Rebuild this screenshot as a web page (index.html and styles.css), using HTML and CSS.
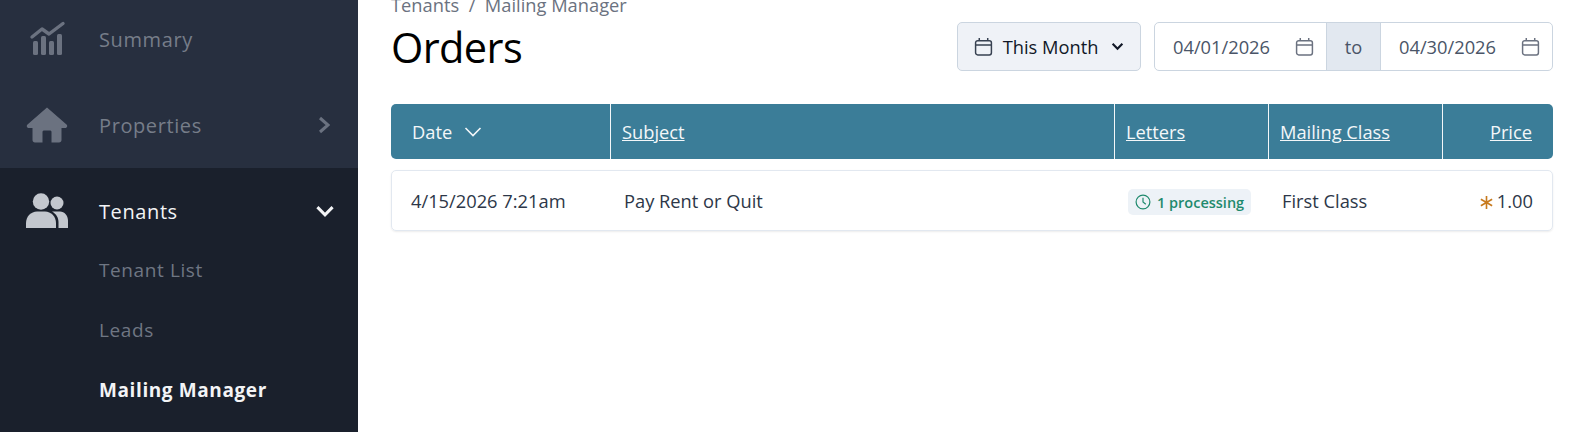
FILE: index.html
```html
<!DOCTYPE html>
<html lang="en">
<head>
  <meta charset="UTF-8" />
  <title>Orders | Mailing Manager</title>
  <link rel="stylesheet" href="styles.css">
</head>
<body>

  <nav class="sidebar">
    <div class="nav-top">
      <a class="nav-item">
        <svg class="nav-icon" viewBox="0 0 42 36" width="42" height="36">
          <path d="M6 16 16 8l7 5L37 2.500" fill="none" stroke="#6b7280" stroke-width="3.400" stroke-linecap="round" stroke-linejoin="round"/>
          <rect x="7" y="20" width="5" height="14" rx="1.500" fill="#6b7280"/>
          <rect x="15" y="15" width="5" height="19" rx="1.500" fill="#6b7280"/>
          <rect x="23" y="20" width="5" height="14" rx="1.500" fill="#6b7280"/>
          <rect x="31" y="13" width="5" height="21" rx="1.500" fill="#6b7280"/>
        </svg>
        <span>Summary</span>
      </a>
      <a class="nav-item">
        <svg class="nav-icon" viewBox="0 0 42 36" width="42" height="36">
          <path d="M21 0.500 1.500 17.500c-1.500 1.500-.5 3.500 1.500 3.500H6.500v12c0 1.500 1 2.500 2.500 2.500h7.500V25c0-1 .8-1.500 1.500-1.500h6c.8 0 1.500.5 1.500 1.500v10.500H33c1.500 0 2.500-1 2.500-2.500V21H39c2 0 3-2 1.500-3.500z" fill="#6b7280"/>
        </svg>
        <span>Properties</span>
        <svg class="nav-chevron chevron-right" viewBox="0 0 12 18" width="12" height="18">
          <path d="M2 2l8 7-8 7" fill="none" stroke="#6b7280" stroke-width="3"/>
        </svg>
      </a>
    </div>
    <div class="nav-open">
      <a class="nav-item nav-current">
        <svg class="nav-icon" viewBox="0 0 42 36" width="42" height="36">
          <circle cx="15" cy="8.500" r="8.200" fill="#c3c7ce"/>
          <circle cx="31" cy="10" r="6.500" fill="#c3c7ce"/>
          <path d="M0 35v-5c0-6.500 5-11.500 11-11.500h8c6 0 11 5 11 11.500v5z" fill="#c3c7ce"/>
          <path d="M26 18.500h8c4.500 0 8 4 8 9V35H32.500v-6c0-4-2-8-6.500-10.500z" fill="#c3c7ce"/>
        </svg>
        <span>Tenants</span>
        <svg class="nav-chevron chevron-down" viewBox="0 0 18 12" width="20" height="13">
          <path d="M2 2l7 7 7-7" fill="none" stroke="#f3f4f6" stroke-width="2.800"/>
        </svg>
      </a>
      <a class="nav-sub">Tenant List</a>
      <a class="nav-sub">Leads</a>
      <a class="nav-sub nav-sub-active">Mailing Manager</a>
    </div>
  </nav>

  <main class="content">
    <div class="crumbs">Tenants &nbsp;/&nbsp; Mailing Manager</div>

    <div class="title-row">
      <h1>Orders</h1>
      <div class="filters">
        <button class="range-btn">
          <svg viewBox="0 0 18 18" width="19" height="19" class="cal">
            <path d="M1.500 5.500A2 2 0 0 1 3.500 3.500h11a2 2 0 0 1 2 2v9.500a2 2 0 0 1-2 2h-11a2 2 0 0 1-2-2zM1.500 7.500h15M5 1v2.500M13 1v2.500" fill="none" stroke="#374151" stroke-width="1.400"/>
          </svg>
          This Month
          <svg viewBox="0 0 12 8" width="13" height="9" class="caret">
            <path d="M1.500 1.500 6 6l4.500-4.500" fill="none" stroke="#111827" stroke-width="2"/>
          </svg>
        </button>
        <div class="dates">
          <div class="date-input">
            <span>04/01/2026</span>
            <svg viewBox="0 0 18 18" width="19" height="19" class="cal">
              <path d="M1.500 5.500A2 2 0 0 1 3.500 3.500h11a2 2 0 0 1 2 2v9.500a2 2 0 0 1-2 2h-11a2 2 0 0 1-2-2zM1.500 7.500h15M5 1v2.500M13 1v2.500" fill="none" stroke="#6b7280" stroke-width="1.400"/>
            </svg>
          </div>
          <div class="date-to">to</div>
          <div class="date-input">
            <span>04/30/2026</span>
            <svg viewBox="0 0 18 18" width="19" height="19" class="cal">
              <path d="M1.500 5.500A2 2 0 0 1 3.500 3.500h11a2 2 0 0 1 2 2v9.500a2 2 0 0 1-2 2h-11a2 2 0 0 1-2-2zM1.500 7.500h15M5 1v2.500M13 1v2.500" fill="none" stroke="#6b7280" stroke-width="1.400"/>
            </svg>
          </div>
        </div>
      </div>
    </div>

    <div class="grid-row table-head">
      <div class="cell head-date">Date
        <svg viewBox="0 0 18 10" width="18" height="10">
          <path d="M1.500 1 9 8.500 16.500 1" fill="none" stroke="#f3f7f9" stroke-width="1.600"/>
        </svg>
      </div>
      <div class="cell"><a>Subject</a></div>
      <div class="cell"><a>Letters</a></div>
      <div class="cell"><a>Mailing Class</a></div>
      <div class="cell cell-right"><a>Price</a></div>
    </div>

    <div class="grid-row table-row">
      <div class="cell">4/15/2026 7:21am</div>
      <div class="cell">Pay Rent or Quit</div>
      <div class="cell">
        <span class="pill">
          <svg viewBox="0 0 16 16" width="16" height="16">
            <circle cx="8" cy="8" r="6.900" fill="none" stroke="#1f8a6d" stroke-width="1.200"/>
            <path d="M8 3.800V8l2.800 2.200" fill="none" stroke="#1f8a6d" stroke-width="1.200"/>
          </svg>
          1 processing
        </span>
      </div>
      <div class="cell">First Class</div>
      <div class="cell cell-right">
        <svg class="coin" viewBox="0 0 12 12" width="13" height="13">
          <path d="M6 0v12M.8 3l10.400 6M.8 9l10.400-6" fill="none" stroke="#c77a1e" stroke-width="1.500"/>
        </svg>
        1.00
      </div>
    </div>
  </main>

</body>
</html>
```

FILE: styles.css
```css
* {
  box-sizing: border-box;
}
html, body {
  height: 432px;
  overflow: hidden;
}
body {
  margin: 0;
  display: flex;
  font-family: "Open Sans", "Noto Sans", sans-serif;
  font-size: 18.3px;
  color: #2d3748;
  background: white;
}

.sidebar {
  width: 358px;
  flex-shrink: 0;
  margin-top: -4px;
  height: 436px;
  display: flex;
  flex-direction: column;
  background: #1a202c;
}
.nav-top {
  background: #272f3f;
}
.nav-item {
  height: 86px;
  display: flex;
  align-items: center;
  padding: 0 20px 0 26px;
  font-size: 20px;
  letter-spacing: 0.6px;
  color: #767d89;
}
.nav-item span {
  margin-left: 31px;
  flex: 1;
}
.nav-current {
  height: 72px;
  padding-top: 14px;
  color: #f3f4f6;
}
.chevron-right {
  margin-right: 8px;
}
.chevron-down {
  margin-right: 3px;
}
.nav-sub {
  display: flex;
  align-items: center;
  height: 60px;
  padding-left: 99px;
  font-size: 19px;
  letter-spacing: 0.6px;
  color: #6f7683;
}
.nav-sub-active {
  color: #f3f4f6;
  font-weight: 700;
}

.content {
  flex: 1;
  padding: 0 41px 0 33px;
  margin-top: -7px;
}
.crumbs {
  height: 24px;
  line-height: 24px;
  color: #6b7280;
}
.title-row {
  display: flex;
  justify-content: space-between;
  align-items: center;
  margin-top: 5px;
  height: 49px;
  margin-bottom: 33px;
}
h1 {
  margin: 0;
  font-size: 41.500px;
  font-weight: 400;
  letter-spacing: -0.6px;
  color: #000;
}
.filters {
  display: flex;
  gap: 13px;
}
.range-btn {
  width: 184px;
  height: 49px;
  display: flex;
  align-items: center;
  justify-content: center;
  gap: 10px;
  background: #eff2f7;
  border: 1px solid #cbd5e0;
  border-radius: 5px;
  font: inherit;
  color: #111827;
}
.caret {
  margin-left: 3px;
}
.dates {
  width: 399px;
  height: 49px;
  display: flex;
  border: 1px solid #cbd5e0;
  border-radius: 5px;
  color: #4a5568;
}
.date-input {
  flex: 1;
  display: flex;
  align-items: center;
  justify-content: space-between;
  padding: 0 12px 0 18px;
}
.date-to {
  width: 55px;
  display: flex;
  align-items: center;
  justify-content: center;
  background: #e2e8f0;
  border-left: 1px solid #cbd5e0;
  border-right: 1px solid #cbd5e0;
}

.grid-row {
  display: grid;
  grid-template-columns: 219px 504px 154px 173.500px 1fr;
}
.table-head {
  height: 55px;
  background: #3b7d98;
  border-radius: 5px;
  color: #f3f7f9;
  margin-bottom: 11px;
}
.table-head .cell {
  padding: 0 21px 0 11px;
  border-left: 1px solid #f3f7f9;
}
.table-head .cell:first-child {
  padding-left: 21px;
  border-left: none;
}
.table-head a {
  text-decoration: underline;
}
.head-date svg {
  margin-left: 12px;
}
.table-row {
  height: 61px;
  border: 1px solid #e2e8f0;
  border-radius: 5px;
  box-shadow: 0 1px 2px rgba(0, 0, 0, 0.08);
}
.table-row .cell {
  padding-left: 13px;
}
.table-row .cell:first-child {
  padding-left: 19px;
}
.table-row .cell:last-child {
  padding-right: 19px;
}
.cell {
  display: flex;
  align-items: center;
}
.cell-right {
  justify-content: flex-end;
}
.pill {
  display: inline-flex;
  align-items: center;
  gap: 6px;
  margin-top: 3px;
  padding: 0 7px;
  height: 26px;
  background: #edf2f7;
  border-radius: 5px;
  font-size: 14.500px;
  font-weight: 600;
  color: #1f8a6d;
}
.coin {
  margin: 3px 4px 0 0;
}
```
